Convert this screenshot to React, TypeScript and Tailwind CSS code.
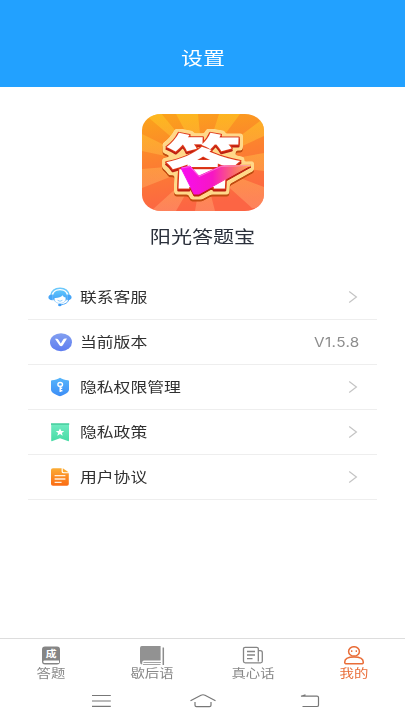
import React from 'react';

const HeadsetIcon = () => (
  <svg width="24" height="20" viewBox="0 0 24 20" fill="none">
    <defs>
      <linearGradient id="headset" x1="0" y1="0" x2="0" y2="1">
        <stop offset="0" stopColor="#5fc6fb" />
        <stop offset="1" stopColor="#3f9ff7" />
      </linearGradient>
    </defs>
    <path d="M2.800 8.500C3.600 3.800 7.300 1.200 12 1.200S20.400 3.800 21.200 8.500" stroke="#6bc8fb" strokeWidth="1.400" />
    <path d="M4.800 12C4.200 6.600 7 3.200 12 3.200S19.800 6.600 19.200 12L17.600 14.500V10.600C16.200 10.400 15.200 9.600 14.600 8.300C13 10.200 10 11.200 6.600 11V14.500Z" fill="url(#headset)" />
    <path d="M6 12.400C7 15 9.200 16.400 12 16.400S17 15 18 12.400" stroke="#9bd0fb" strokeWidth=".8" />
    <path d="M9.600 13.300Q12 15.200 14.400 13.300" stroke="#7cc4fa" strokeWidth=".9" />
    <path d="M4.800 7.400V13.200C2 13.400.4 12 .4 10.300S2 7.200 4.800 7.400ZM19.200 7.400V13.200C22 13.400 23.600 12 23.600 10.300S22 7.200 19.200 7.400Z" fill="#47a6f8" />
    <path d="M20.800 13C19.800 15.800 17 17.400 12.600 17.900" stroke="#5aaefa" strokeWidth="1" />
    <ellipse cx="11.800" cy="18" rx="1.700" ry="1.300" fill="#3b9af6" />
  </svg>
);

const VersionIcon = () => (
  <svg width="24" height="20" viewBox="0 0 24 20">
    <defs>
      <linearGradient id="version" x1="0" y1="0" x2="0" y2="1">
        <stop offset="0" stopColor="#829ff0" />
        <stop offset="1" stopColor="#5f7df0" />
      </linearGradient>
    </defs>
    <ellipse cx="13" cy="10.200" rx="11" ry="9" fill="url(#version)" />
    <path d="M7 6.800H8.800Q9.800 6.800 10.400 7.800L12.800 11.400L15 7.800Q15.800 6.500 17.200 6.500H19L14.800 13.200Q13.200 15.400 11.400 13.300Z" fill="#fff" />
  </svg>
);

const ShieldIcon = () => (
  <svg width="24" height="20" viewBox="0 0 24 20">
    <defs>
      <linearGradient id="shield" x1="0" y1="0" x2="0" y2="1">
        <stop offset="0" stopColor="#55b5fb" />
        <stop offset="1" stopColor="#3d8df6" />
      </linearGradient>
    </defs>
    <path d="M12 .8C14.4 2.4 17.2 3.1 20 3.2Q21 3.3 21 4.2V12.400C21 15.800 16.400 17.600 12 19.200C7.600 17.600 3 15.800 3 12.400V4.200Q3 3.300 4 3.200C6.800 3.100 9.600 2.400 12 .8Z" fill="url(#shield)" />
    <g fill="none" stroke="#fff" strokeWidth="1.400">
      <ellipse cx="12.200" cy="7.400" rx="2.300" ry="1.900" />
      <path d="M12.200 9.300V15M12.200 11.200H14.200M12.200 13.800H14.400" />
    </g>
  </svg>
);

const BookmarkIcon = () => (
  <svg width="24" height="20" viewBox="0 0 24 20">
    <defs>
      <linearGradient id="bookmark" x1="0" y1="0" x2="0" y2="1">
        <stop offset="0" stopColor="#6eeac0" />
        <stop offset="1" stopColor="#47dba5" />
      </linearGradient>
    </defs>
    <path d="M3 1.200H21.200V3H3Z" fill="#4fd3a4" />
    <path d="M3.200 3H21V18.400Q21 19.600 19.800 19L12 16.200L4.400 19Q3.200 19.600 3.200 18.400Z" fill="url(#bookmark)" />
    <path d="M12 6.400L13.300 9H16.200L13.900 10.900L14.700 13.700L12 12.100L9.300 13.700L10.100 10.900L7.800 9H10.700Z" fill="#fff" />
  </svg>
);

const DocumentIcon = () => (
  <svg width="24" height="20" viewBox="0 0 24 20">
    <defs>
      <linearGradient id="document" x1="0" y1="0" x2="0" y2="1">
        <stop offset="0" stopColor="#fbad35" />
        <stop offset="1" stopColor="#fb6a12" />
      </linearGradient>
    </defs>
    <path d="M5 1.200H13.600V4.600Q13.600 6.200 15.200 6.200H20.800V17Q20.800 18.800 19 18.800H5Q3 18.800 3 17V3Q3 1.200 5 1.200Z" fill="url(#document)" />
    <path d="M14.800 1.200L20.600 5.200H16Q14.800 5.200 14.800 4.200Z" fill="#fba92f" />
    <path d="M6.600 8.600H17.400M6.600 12H17.400M6.600 15.400H13.600" stroke="#ffeeda" strokeWidth="1.300" />
  </svg>
);

const AppLogo = () => (
  <svg width="122" height="97" viewBox="0 0 122 97">
    <defs>
      <linearGradient id="logoBg" x1="0" y1="0" x2="0.200" y2="1">
        <stop offset="0" stopColor="#fba519" />
        <stop offset="0.500" stopColor="#fc8030" />
        <stop offset="1" stopColor="#fc6544" />
      </linearGradient>
      <linearGradient id="rays" x1="0" y1="0" x2="0" y2="1">
        <stop offset="0" stopColor="#ffca20" />
        <stop offset="1" stopColor="#ff9a70" />
      </linearGradient>
      <linearGradient id="tick" x1="0" y1="0" x2="1" y2="0">
        <stop offset="0" stopColor="#f80cf0" />
        <stop offset="0.450" stopColor="#f716c4" />
        <stop offset="0.750" stopColor="#fa6a72" />
        <stop offset="1" stopColor="#fdb54c" />
      </linearGradient>
      <clipPath id="logoClip">
        <rect width="122" height="97" rx="19" ry="16" />
      </clipPath>
      {/* cream rim with a brown drop edge around the whole mark */}
      <filter id="rim" x="0" y="0" width="122" height="97" filterUnits="userSpaceOnUse" colorInterpolationFilters="sRGB">
        <feOffset in="SourceAlpha" dy="1.500" result="low" />
        <feMerge result="body">
          <feMergeNode in="SourceAlpha" />
          <feMergeNode in="low" />
        </feMerge>
        <feMorphology in="body" operator="dilate" radius="3" result="wide" />
        <feGaussianBlur in="wide" stdDeviation="1" result="soft" />
        <feComponentTransfer in="soft" result="shape">
          <feFuncA type="linear" slope="4" intercept="-1.500" />
        </feComponentTransfer>
        <feFlood floodColor="#ffd88a" />
        <feComposite in2="shape" operator="in" result="cream" />
        <feOffset in="shape" dy="1.500" result="edge" />
        <feFlood floodColor="#c04c10" />
        <feComposite in2="edge" operator="in" result="brown" />
        <feOffset in="SourceAlpha" dx="-.5" dy="2" result="under" />
        <feFlood floodColor="#bd1f12" />
        <feComposite in2="under" operator="in" result="red" />
        <feMerge>
          <feMergeNode in="brown" />
          <feMergeNode in="cream" />
          <feMergeNode in="red" />
          <feMergeNode in="SourceGraphic" />
        </feMerge>
      </filter>
    </defs>
    <g clipPath="url(#logoClip)">
      <rect width="122" height="97" fill="url(#logoBg)" />
      <path
        d="M61 50L0 -2H18ZM61 50L34 0H56ZM61 50L77 0H98ZM61 50L122 4V22ZM61 50L122 39V57ZM61 50L0 20V37ZM61 50L0 55V74ZM61 50L9 97H34ZM61 50L53 97H73ZM61 50L122 73V94H110Z"
        fill="url(#rays)"
        fillOpacity=".55"
      />
      <g filter="url(#rim)" strokeLinejoin="round">
        <text
          transform="matrix(1.310 0 -.04 1 22 69)"
          className="font-['Noto_Sans_CJK_SC',sans-serif] text-[58px] font-black"
          fill="#fff"
          stroke="#df3818"
          strokeWidth="2"
          paintOrder="stroke"
        >
          答
        </text>
        <path d="M39 54L48 52L57 62L79 52L109 51L57 80L52 80Z" fill="url(#tick)" stroke="url(#tick)" />
        <path d="M40 54L48 52.500L57 62.500L79 52.500L108 51.500" fill="none" stroke="#ff9be0" strokeOpacity=".6" />
      </g>
    </g>
  </svg>
);

const Chevron = () => (
  <svg width="10" height="14" viewBox="0 0 10 14" fill="none" stroke="#c4c4c4" strokeWidth="1.200">
    <path d="M1.200 1.500L8.400 7L1.200 12.500" />
  </svg>
);

const QuizTabIcon = () => (
  <svg width="26" height="20" viewBox="0 0 26 20">
    <rect x="4" y=".6" width="18" height="18" rx="3" fill="#858585" />
    <path d="M6.500 14.500H21V17H6.500Q5.300 17 5.300 15.750T6.500 14.500Z" fill="#fff" />
    <text transform="translate(7.700 11.300) scale(1.200 1)" fill="#fff" className="font-['Noto_Sans_CJK_SC',sans-serif] text-[9px] font-bold">成</text>
  </svg>
);

const BookTabIcon = () => (
  <svg width="26" height="20" viewBox="0 0 26 20" fill="none">
    <path d="M2.800 0H21.600V14.500H5Q3.200 14.500 3.200 16.500V18.600Q1 18.500 1 16V2Q1 0 2.800 0Z" fill="#929292" />
    <path d="M24.300 1.500V19" stroke="#8c8c8c" strokeWidth="1.500" />
    <path d="M4.500 16.500H22M4 18.500H21.500" stroke="#a4a4a4" />
  </svg>
);

const NewsTabIcon = () => (
  <svg width="26" height="20" viewBox="0 0 26 20" fill="none" stroke="#858585" strokeWidth="1.300">
    <path d="M18.300 15.500V2.800Q18.300 1.300 16.600 1.300H5.200Q3.500 1.300 3.500 2.800V15.300Q3.500 16.800 5.200 16.800H20.600Q22.300 16.800 22.300 15.300V6.500Q22.300 4.700 20 4.700H18.300" />
    <path d="M7 5.500H15M7 9H15M7 12.600H12.500" />
  </svg>
);

const MineTabIcon = () => (
  <svg width="26" height="20" viewBox="0 0 26 20" fill="none" stroke="#e96d38" strokeWidth="1.500">
    <ellipse cx="13" cy="5.400" rx="5.400" ry="4.700" />
    <path d="M3.700 16.200C3.700 12.500 7.700 11 13 11S22.300 12.500 22.300 16.200Q22.300 17.800 20.400 17.800H5.600Q3.700 17.800 3.700 16.200Z" />
    <path d="M10.700 4.200V5.900M15.300 4.200V5.900" strokeWidth="1.300" />
  </svg>
);

const menuItems = [
  { icon: <HeadsetIcon />, label: '联系客服' },
  { icon: <VersionIcon />, label: '当前版本', value: 'V1.5.8' },
  { icon: <ShieldIcon />, label: '隐私权限管理' },
  { icon: <BookmarkIcon />, label: '隐私政策' },
  { icon: <DocumentIcon />, label: '用户协议' },
];

const tabs = [
  { icon: <QuizTabIcon />, label: '答题', active: false },
  { icon: <BookTabIcon />, label: '歇后语', active: false },
  { icon: <NewsTabIcon />, label: '真心话', active: false },
  { icon: <MineTabIcon />, label: '我的', active: true },
];

export default function App() {
  return (
    <div className="flex h-[720px] w-[405px] flex-col overflow-hidden bg-white font-['Noto_Sans_CJK_SC',sans-serif]">
      <header className="flex h-[87px] shrink-0 justify-center bg-[#22a1ff] pt-11">
        <h1 className="scale-x-[1.22] text-[18px] leading-[26px] text-white">设置</h1>
      </header>

      <main className="flex flex-1 flex-col">
        <div className="flex flex-col items-center pt-[27px]">
          <AppLogo />
          <h2 className="mt-3 scale-x-[1.24] text-[17px] leading-[26px] text-[#2b303b]">阳光答题宝</h2>
        </div>

        <ul className="mx-7 mt-[26px]">
          {menuItems.map((item) => (
            <li key={item.label} className="flex h-[45px] items-center border-b border-[#eeeeee] pl-5">
              {item.icon}
              <span className="mb-0.5 ml-2 origin-left scale-x-[1.2] text-[14px] leading-5 text-[#303030]">{item.label}</span>
              {item.value ? (
                <span className="mr-[17px] ml-auto origin-right scale-x-[1.18] font-[Inter,sans-serif] text-[13px] leading-5 tracking-[0.3px] text-[#8c8c8c]">
                  {item.value}
                </span>
              ) : (
                <span className="mr-[19px] ml-auto">
                  <Chevron />
                </span>
              )}
            </li>
          ))}
        </ul>
      </main>

      <nav className="grid h-[48px] shrink-0 grid-cols-4 border-t border-[#dddddd]">
        {tabs.map((tab) => (
          <div key={tab.label} className="flex flex-col items-center pt-[7px]">
            {tab.icon}
            <span className={tab.active ? 'scale-x-[1.2] text-[12px] leading-[14px] text-[#e96d38]' : 'scale-x-[1.2] text-[12px] leading-[14px] text-[#888888]'}>
              {tab.label}
            </span>
          </div>
        ))}
      </nav>

      <footer className="flex h-[34px] shrink-0 items-start justify-between pt-2 pr-[85px] pl-[91px]">
        <svg width="20" height="14" viewBox="0 0 20 14" stroke="#777777" strokeWidth="1.200">
          <path d="M1 1.500H19.800M1 7H19.800M1 12.400H19.800" />
        </svg>
        <svg className="-ml-[5px]" width="26" height="14" viewBox="0 0 26 14" fill="none" stroke="#777777" strokeWidth="1.200">
          <path d="M.5 6.800L11 1.200Q13 .3 15 1.200L25.500 6.800M5 8V11.300Q5 12.600 6.500 12.600H19.500Q21 12.600 21 11.300V8" />
        </svg>
        <svg width="20" height="14" viewBox="0 0 20 14" fill="none" stroke="#777777" strokeWidth="1.200">
          <path d="M5.500 .8L1 2.200H17Q18.500 2.200 18.500 3.500V11.200Q18.500 12.500 17 12.500H2.500" />
        </svg>
      </footer>
    </div>
  );
}
